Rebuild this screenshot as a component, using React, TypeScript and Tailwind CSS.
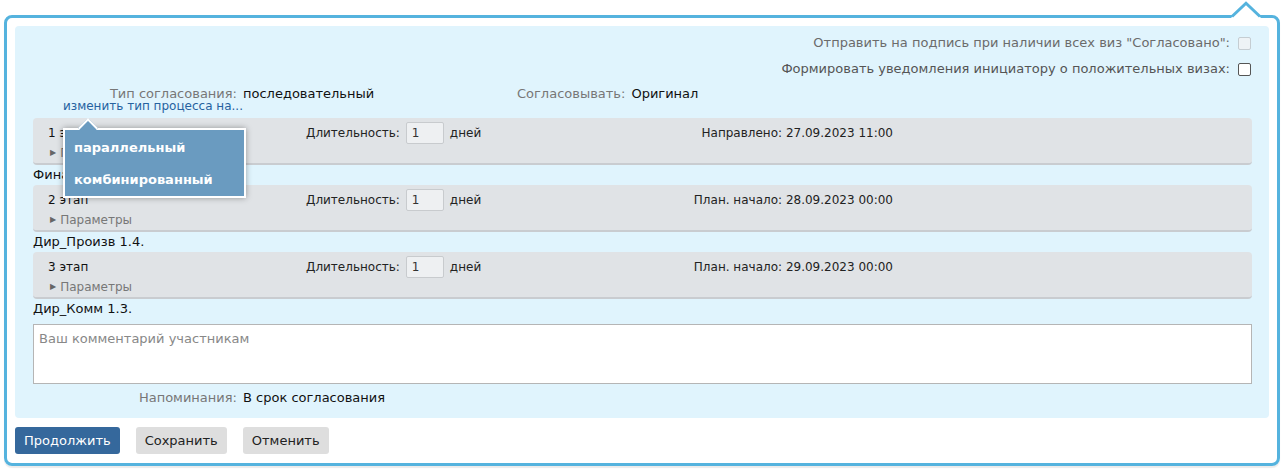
import React from "react";

const stages = [
  { title: "1 этап", dateLabel: "Направлено:", date: "27.09.2023 11:00", who: "Финансовый директор 1.1." },
  { title: "2 этап", dateLabel: "План. начало:", date: "28.09.2023 00:00", who: "Дир_Произв 1.4." },
  { title: "3 этап", dateLabel: "План. начало:", date: "29.09.2023 00:00", who: "Дир_Комм 1.3." },
];

function Stage({ title, dateLabel, date }: { title: string; dateLabel: string; date: string }) {
  return (
    <div className="bg-[#e0e3e6] rounded-[4px] border-b-2 border-[#c9ccd0] pl-[15px] pt-[4px] pb-[3px] text-[12px]">
      <div className="flex items-center h-[22px]">
        <div className="w-[258px] text-[#111]">{title}</div>
        <div className="w-[200px] flex items-center text-[#222]">
          <span>Длительность:</span>
          <span className="ml-[6px] w-[38px] h-[22px] bg-[#eef0f2] border border-[#c8cbce] rounded-[2px] pl-[5px] leading-[20px] text-[#333]">
            1
          </span>
          <span className="ml-[6px]">дней</span>
        </div>
        <div className="w-[387px] text-right text-[#222]">
          {dateLabel} {date}
        </div>
      </div>
      <div className="mt-[2px] h-[14px] leading-[14px] text-[12px] text-[#777] pl-[2px] flex items-center">
        <span className="text-[8px] mr-[4px] text-[#666]">▶</span>
        Параметры
      </div>
    </div>
  );
}

function Check({ disabled }: { disabled?: boolean }) {
  return (
    <span
      className={
        "inline-block w-[13px] h-[13px] rounded-[2px] border ml-[8px] " +
        (disabled ? "bg-[#eef3f6] border-[#c5cdd2]" : "bg-white border-[#555]")
      }
    />
  );
}

export default function App() {
  return (
    <div className="bg-white min-h-[469px] pt-[15px] pl-[4px] pr-[4px] text-[13px] text-[#111]" style={{ fontFamily: '"DejaVu Sans", Verdana, sans-serif' }}>
      <div className="relative border-[3px] border-[#55b3de] rounded-[8px] p-[8px] pb-[9px] shadow-[0_2px_1px_rgba(0,0,0,0.08)]">
        <svg className="absolute top-[-17px] right-[15px]" width="32" height="17" viewBox="0 0 32 17">
          <polygon points="1,17 16,2 31,17" fill="#ffffff" />
          <polyline points="2,15.5 16,2.2 30,15.5" fill="none" stroke="#55b3de" strokeWidth="3" />
        </svg>

        <div className="relative bg-[#e0f4fd] rounded-[4px] pt-[4px] pb-[11px] pl-[18px] pr-[17px]">
          <div className="flex items-center justify-end h-[26px] text-[#6b6b6b] pr-[1px]">
            Отправить на подпись при наличии всех виз "Согласовано":
            <Check disabled />
          </div>
          <div className="flex items-center justify-end h-[26px] text-[#555] pr-[1px]">
            Формировать уведомления инициатору о положительных визах:
            <Check />
          </div>

          <div className="flex h-[16px] leading-[16px] mt-[4px]">
            <div className="w-[204px] text-right text-[#777]">Тип согласования:</div>
            <div className="ml-[6px] w-[274px]">последовательный</div>
            <div className="text-[#777]">Согласовывать:</div>
            <div className="ml-[6px]">Оригинал</div>
          </div>
          <div className="mt-[-3px] h-[14px] leading-[14px] text-[12px] pl-[30px]">
            <span className="text-[#2662a0]">изменить тип процесса на...</span>
          </div>

          <div className="mt-[5px]">
            {stages.map((s) => (
              <div key={s.title}>
                <Stage title={s.title} dateLabel={s.dateLabel} date={s.date} />
                <div className="h-[20px] flex items-center">{s.who}</div>
              </div>
            ))}
          </div>

          <div className="mt-[5px] h-[60px] bg-white border border-[#b5b5b5] px-[5px] pt-[4px] text-[#888]">
            Ваш комментарий участникам
          </div>

          <div className="flex h-[18px] items-center mt-[5px]">
            <div className="w-[204px] text-right text-[#777]">Напоминания:</div>
            <div className="ml-[6px]">В срок согласования</div>
          </div>

          <div className="absolute left-[48px] top-[102px] w-[183px] h-[70px] bg-[#6a9bc0] border-2 border-white shadow-[0_0_6px_rgba(0,0,0,0.35)] pt-[2px] text-white font-bold">
            <div className="absolute left-[16px] top-[-9px] w-[14px] h-[14px] bg-[#6a9bc0] border-l-2 border-t-2 border-white rotate-45" />
            <div className="relative h-[32px] flex items-center pl-[9px]">параллельный</div>
            <div className="relative h-[32px] flex items-center pl-[9px]">комбинированный</div>
          </div>
        </div>

        <div className="flex gap-[16px] mt-[9px]">
          <button className="h-[27px] px-[9px] rounded-[3px] bg-[#35689c] text-white">Продолжить</button>
          <button className="h-[27px] px-[9px] rounded-[3px] bg-[#dedede] text-[#222]">Сохранить</button>
          <button className="h-[27px] px-[9px] rounded-[3px] bg-[#dedede] text-[#222]">Отменить</button>
        </div>
      </div>
    </div>
  );
}
